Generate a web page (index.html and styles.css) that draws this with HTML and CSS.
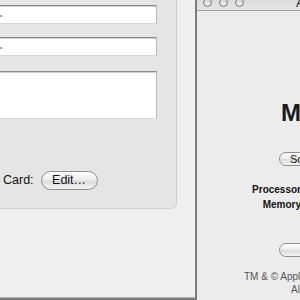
FILE: index.html
```html
<!DOCTYPE html>
<html>
<head>
<meta charset="utf-8">
<link rel="stylesheet" href="styles.css">
</head>
<body>
<div class="desk">
  <div class="left-win">
    <div class="group">
      <div class="field first"><span class="tick"></span></div>
      <div class="field second"><span class="tick"></span></div>
      <div class="area"></div>
      <div class="card-row">
        <span class="label">Card:</span>
        <span class="btn edit">Edit…</span>
      </div>
    </div>
  </div>
  <div class="divider"></div>
  <div class="right-win">
    <div class="titlebar">
      <span class="light l1"></span>
      <span class="light"></span>
      <span class="light"></span>
      <span class="title">About This Mac</span>
    </div>
    <div class="content">
      <div class="os">Mac OS X</div>
      <div class="small-btn sw">Software Update…</div>
      <div class="spec proc">Processor</div>
      <div class="spec mem">Memory</div>
      <div class="small-btn more">More Info…</div>
      <div class="legal l1">TM &amp; © Apple Computer, Inc. 1983-2005</div>
      <div class="legal l2">All Rights Reserved.</div>
    </div>
  </div>
</div>
</body>
</html>
```

FILE: styles.css
```css
html, body {
  margin: 0;
  padding: 0;
}
body {
  width: 300px;
  height: 300px;
  overflow: hidden;
  background: #e9e9e9;
  font-family: "Liberation Sans", Arial, sans-serif;
  color: #111;
}
.desk {
  display: flex;
  width: 300px;
  height: 300px;
}
.left-win {
  width: 195px;
  height: 297px;
  flex: none;
  background: #efefef;
  border-bottom: 1px solid #b4b4b4;
  box-shadow: 0 2px 0 #7c7c7c;
}
.group {
  width: 176px;
  height: 208px;
  box-sizing: content-box;
  padding-top: 5px;
  box-sizing: border-box;
  width: 177px;
  height: 209px;
  background: #e5e5e5;
  border-right: 1px solid #cdcdcd;
  border-bottom: 1px solid #d2d2d2;
  border-bottom-right-radius: 6px;
  display: flex;
  flex-direction: column;
}
.field, .area {
  width: 157px;
  box-sizing: border-box;
  background: #fff;
  border-top: 1px solid #8c8c8c;
  border-right: 1px solid #b8b8b8;
  border-bottom: 1px solid #d6d6d6;
  box-shadow: inset 0 1px 0 #d0d0d0;
}
.field {
  height: 19px;
}
.field.second {
  margin-top: 13px;
}
.tick {
  display: block;
  width: 2px;
  height: 2px;
  margin-top: 9px;
  background: #9a9a9a;
}
.area {
  margin-top: 15px;
  height: 48px;
}
.card-row {
  display: flex;
  align-items: center;
  margin-top: 52px;
  padding-left: 3px;
  gap: 7px;
}
.label {
  font-size: 12.5px;
  line-height: 19px;
}
.btn {
  display: block;
  box-sizing: border-box;
  height: 19px;
  border-radius: 10px;
  border: 1px solid #8e8e8e;
  background: linear-gradient(#fefefe 0%, #eeeeee 45%, #dcdcdc 55%, #f4f4f4 100%);
  font-size: 12.5px;
  line-height: 17px;
  text-align: center;
}
.edit {
  width: 57px;
}
.divider {
  width: 2px;
  height: 300px;
  flex: none;
  background: linear-gradient(90deg, #8a8a8a, #6f6f6f);
}
.right-win {
  flex: 1;
  height: 300px;
  background: #ececec;
  overflow: hidden;
  white-space: nowrap;
}
.titlebar {
  height: 10px;
  border-bottom: 1px solid #a2a2a2;
  background: linear-gradient(#dcdcdc, #e6e6e6);
  display: flex;
  align-items: flex-start;
}
.light {
  display: block;
  flex: none;
  width: 9px;
  height: 9px;
  box-sizing: border-box;
  margin-top: -2px;
  margin-left: 7px;
  border-radius: 50%;
  border: 1px solid #7e7e7e;
  background: radial-gradient(circle at 50% 70%, #f2f2f2, #c4c4c4);
}
.light.l1 {
  margin-left: 6px;
}
.title {
  margin-left: 52px;
  margin-top: -4px;
  font-size: 13px;
  line-height: 13px;
  color: #222;
}
.content {
  display: flex;
  flex-direction: column;
  align-items: flex-start;
}
.os {
  margin-top: 90px;
  margin-left: 84px;
  font-size: 24px;
  line-height: 24px;
  font-weight: bold;
  color: #1a1a1a;
}
.small-btn {
  box-sizing: border-box;
  height: 14px;
  width: 110px;
  border-radius: 8px;
  border: 1px solid #8e8e8e;
  background: linear-gradient(#fefefe 0%, #eeeeee 45%, #dcdcdc 55%, #f4f4f4 100%);
  font-size: 11px;
  line-height: 12px;
  padding-left: 10px;
  margin-left: 82px;
}
.sw {
  margin-top: 27px;
}
.spec {
  width: 104px;
  text-align: right;
  font-size: 10px;
  line-height: 12px;
  font-weight: bold;
  color: #111;
}
.proc {
  margin-top: 18px;
}
.mem {
  margin-top: 3px;
}
.more {
  margin-top: 32px;
  color: transparent;
}
.legal {
  font-size: 10px;
  line-height: 13px;
  color: #555;
}
.legal.l1 {
  margin-top: 13px;
  margin-left: 47px;
}
.legal.l2 {
  margin-left: 94px;
}
```
